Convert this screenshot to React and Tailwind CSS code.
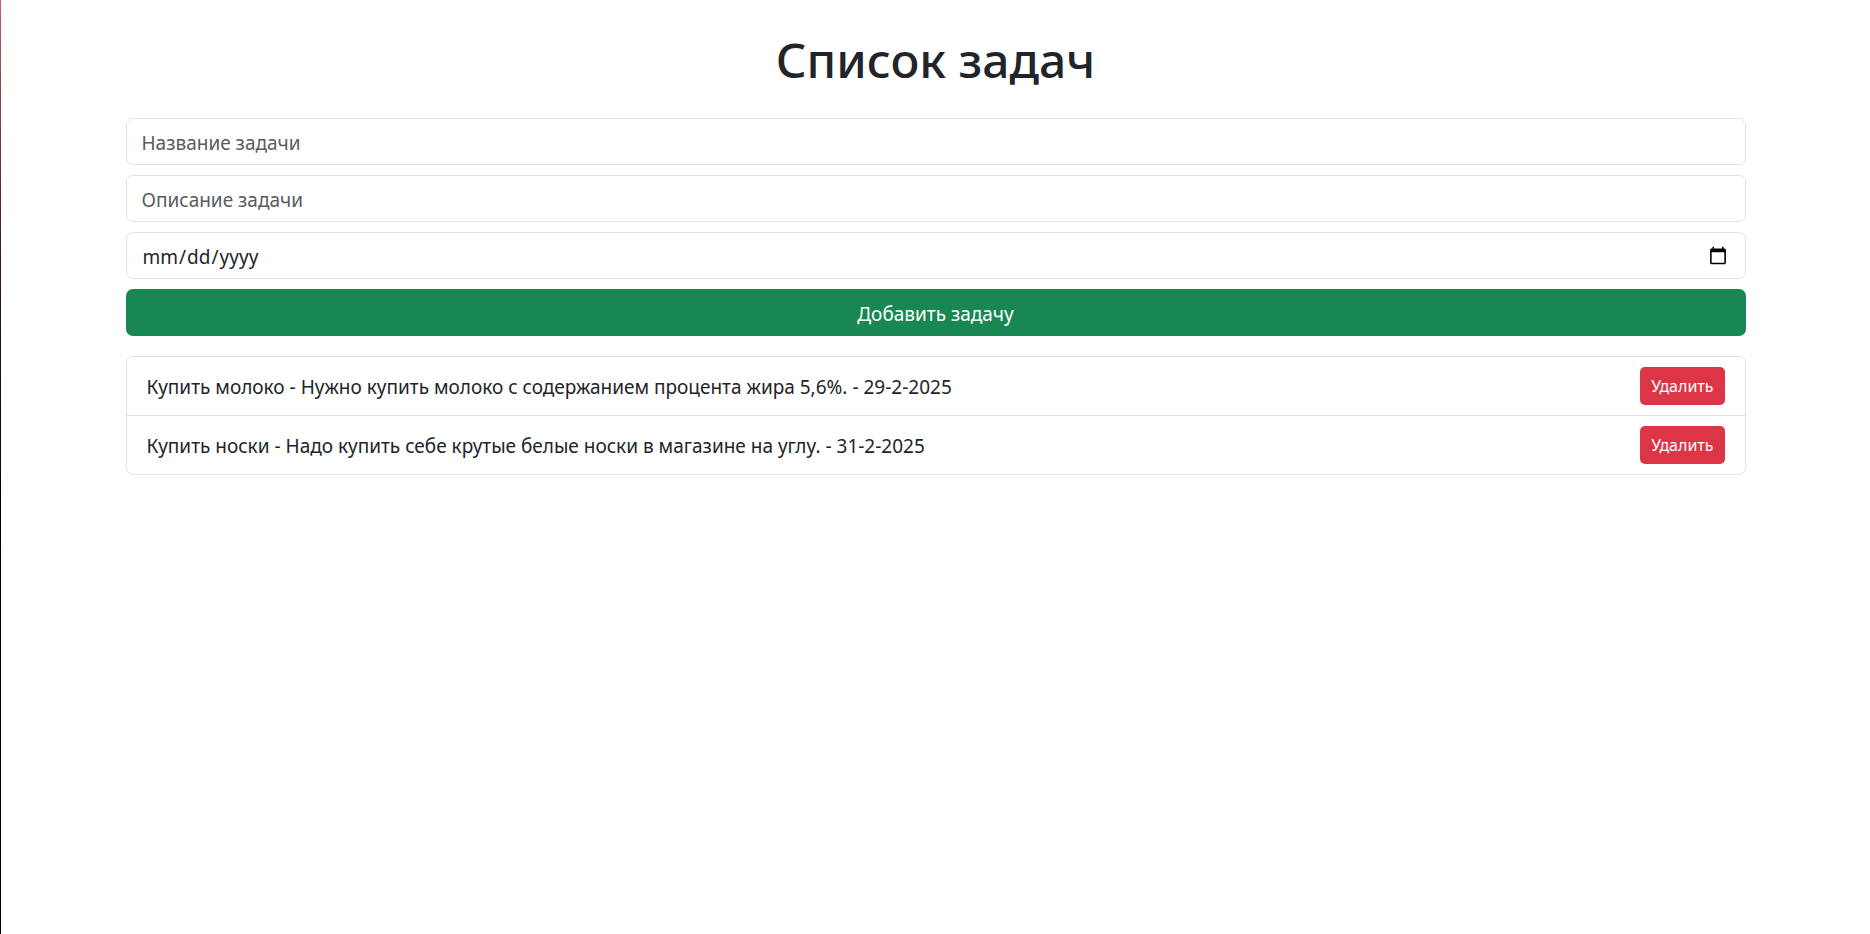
import { useState } from "react";

const initialTasks = [
  {
    id: 1,
    title: "Купить молоко",
    description: "Нужно купить молоко с содержанием процента жира 5,6%.",
    date: "29-2-2025",
  },
  {
    id: 2,
    title: "Купить носки",
    description: "Надо купить себе крутые белые носки в магазине на углу.",
    date: "31-2-2025",
  },
];

const fieldClass =
  "block h-[47px] w-full rounded-[7px] border border-[#dee2e6] bg-white px-[15px] pt-0.5 text-[19px] leading-[30px] text-[#212529] placeholder:text-[#595c5f] placeholder:opacity-100 focus:outline-2 focus:outline-[#86b7fe] [&::-webkit-calendar-picker-indicator]:mr-0.5 [&::-webkit-calendar-picker-indicator]:mb-0.5 [&::-webkit-calendar-picker-indicator]:size-5 [&::-webkit-calendar-picker-indicator]:p-0";

export default function App() {
  const [tasks, setTasks] = useState(initialTasks);

  function addTask(event) {
    event.preventDefault();
    const form = event.currentTarget;
    const data = new FormData(form);
    if (!data.get("title")) return;
    setTasks([
      ...tasks,
      {
        id: Date.now(),
        title: data.get("title"),
        description: data.get("description"),
        date: data.get("date"),
      },
    ]);
    form.reset();
  }

  return (
    <div className="flex min-h-screen bg-white font-['Noto_Sans',sans-serif] text-[19px] leading-[30px] text-[#212529]">
      <div className="w-px shrink-0 bg-linear-to-b from-[#d15a60] via-[#32141f] via-30% to-[#00000f] to-60%" />
      <main className="mx-auto w-full max-w-[1650px] px-[15px] pt-[30px]">
        <h1 className="mb-7 text-center text-[48px] leading-[60px] font-medium">Список задач</h1>

        <form onSubmit={addTask} className="mb-5 flex flex-col gap-2.5">
          <input type="text" name="title" aria-label="Название задачи" placeholder="Название задачи" className={fieldClass} />
          <input type="text" name="description" aria-label="Описание задачи" placeholder="Описание задачи" className={fieldClass} />
          <input type="date" name="date" aria-label="Дата" className={fieldClass} />
          <button type="submit" className="h-[47px] w-full cursor-pointer rounded-[7px] bg-[#198754] pt-0.5 text-white hover:bg-[#157347]">
            Добавить задачу
          </button>
        </form>

        <ul className="divide-y divide-[#dee2e6] rounded-[7px] border border-[#dee2e6]">
          {tasks.map((task) => (
            <li key={task.id} className="flex items-center justify-between gap-5 px-5 py-2.5">
              <span className="pt-0.5">
                {task.title} - {task.description} - {task.date}
              </span>
              <button
                type="button"
                onClick={() => setTasks(tasks.filter((t) => t.id !== task.id))}
                className="shrink-0 cursor-pointer rounded-[5px] bg-[#dc3545] px-[11px] pt-[5px] pb-1 text-[16px] leading-[29px] text-white hover:bg-[#bb2d3b]"
              >
                Удалить
              </button>
            </li>
          ))}
        </ul>
      </main>
    </div>
  );
}
